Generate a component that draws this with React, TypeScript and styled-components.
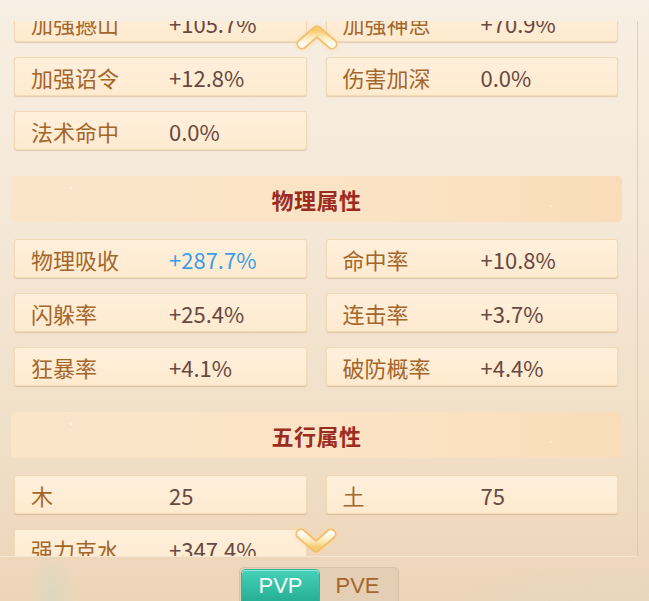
import React, { useLayoutEffect, useRef, useState } from "react";
import styled, { createGlobalStyle } from "styled-components";

interface IStat {
    label: string;
    value: string;
    highlight?: boolean;
}
interface ISection {
    title?: string;
    stats: IStat[];
}

const sections: ISection[] = [
    {
        stats: [
            { label: "加强撼山", value: "+105.7%" },
            { label: "加强神思", value: "+70.9%" },
            { label: "加强诏令", value: "+12.8%" },
            { label: "伤害加深", value: "0.0%" },
            { label: "法术命中", value: "0.0%" },
        ],
    },
    {
        title: "物理属性",
        stats: [
            { label: "物理吸收", value: "+287.7%", highlight: true },
            { label: "命中率", value: "+10.8%" },
            { label: "闪躲率", value: "+25.4%" },
            { label: "连击率", value: "+3.7%" },
            { label: "狂暴率", value: "+4.1%" },
            { label: "破防概率", value: "+4.4%" },
        ],
    },
    {
        title: "五行属性",
        stats: [
            { label: "木", value: "25" },
            { label: "土", value: "75" },
            { label: "强力克水", value: "+347.4%" },
        ],
    },
];

const Chevron: React.FC<{ down?: boolean }> = ({ down }) => {
    const id = down ? "chev-down" : "chev-up";
    const d = down ? "M7 7 L22 20 L37 7" : "M7 20 L22 7 L37 20";
    return (
        <svg width="44" height="27" viewBox="0 0 44 27">
            <defs>
                <linearGradient id={id} x1="0" y1={down ? "0" : "1"} x2="0" y2={down ? "1" : "0"}>
                    <stop offset="0" stopColor="#fffcf0" />
                    <stop offset="0.6" stopColor="#fbe7b0" />
                    <stop offset="1" stopColor="#f6cc6e" />
                </linearGradient>
            </defs>
            <path d={d} fill="none" stroke="#f0b665" strokeWidth="11" strokeLinecap="round" strokeLinejoin="round" opacity="0.8" />
            <path d={d} fill="none" stroke={`url(#${id})`} strokeWidth="7.5" strokeLinecap="round" strokeLinejoin="round" />
        </svg>
    );
};

const App: React.FC = () => {
    const scrollRef = useRef<HTMLDivElement>(null);
    const [mode, setMode] = useState<"PVP" | "PVE">("PVP");

    useLayoutEffect(() => {
        if (scrollRef.current) scrollRef.current.scrollTop = 18;
    }, []);

    return (
        <Page>
            <GlobalStyle />
            <PanelWrap>
                <ScrollArea ref={scrollRef}>
                    <List>
                        {sections.map((section, i) => (
                            <Section key={i}>
                                {section.title && (
                                    <SectionHeader>{section.title}</SectionHeader>
                                )}
                                <Grid>
                                    {section.stats.map((stat) => (
                                        <Card key={stat.label}>
                                            <Label>{stat.label}</Label>
                                            <Value $highlight={stat.highlight}>{stat.value}</Value>
                                        </Card>
                                    ))}
                                </Grid>
                            </Section>
                        ))}
                    </List>
                </ScrollArea>
                <ArrowUp><Chevron /></ArrowUp>
                <ArrowDown><Chevron down /></ArrowDown>
            </PanelWrap>
            <Footer>
                <Toggle>
                    {(["PVP", "PVE"] as const).map((m) => (
                        <ToggleButton key={m} $active={mode === m} onClick={() => setMode(m)}>
                            {m}
                        </ToggleButton>
                    ))}
                </Toggle>
            </Footer>
        </Page>
    );
};
export default App;


const GlobalStyle = createGlobalStyle`
  body {
    margin: 0;
    background: #f3e6d3;
  }
`;

const Page = styled.div`
  width: 649px;
  height: 601px;
  overflow: hidden;
  position: relative;
  font-family: "Noto Sans CJK SC", "Noto Sans", sans-serif;
  background:
    radial-gradient(ellipse 22px 40px at 52px 595px, rgba(196, 218, 200, 0.45), transparent),
    radial-gradient(ellipse 200px 50px at 620px 615px, rgba(222, 222, 196, 0.4), transparent),
    linear-gradient(180deg, #f7efe3 0%, #f5e8d7 35%, #f1e0c9 70%, #edd5b8 100%);
`;

const PanelWrap = styled.div`
  position: relative;
  margin-top: 21px;
  width: 638px;
`;

const ScrollArea = styled.div`
  height: 535px;
  overflow-y: auto;
  scrollbar-width: none;
  border-right: 1px solid rgba(221, 200, 172, 0.8);
  border-bottom: 1px solid rgba(245, 232, 214, 0.9);
  &::-webkit-scrollbar {
    display: none;
  }
`;

const List = styled.div`
  display: flex;
  flex-direction: column;
  gap: 26px;
  padding: 0 15px 40px 11px;
`;

const Section = styled.div`
  display: flex;
  flex-direction: column;
  gap: 17px;
`;

const SectionHeader = styled.div`
  height: 46px;
  display: flex;
  align-items: center;
  justify-content: center;
  border-radius: 4px;
  background:
    radial-gradient(circle 2px at 60px 12px, rgba(255, 255, 255, 0.7), transparent),
    radial-gradient(circle 2px at 540px 30px, rgba(255, 255, 255, 0.6), transparent),
    linear-gradient(90deg, #fae5c9 0%, #fbe4c5 50%, #f9ddba 100%);
  color: #9c2b22;
  font-size: 22px;
  font-weight: 700;
  letter-spacing: 0.5px;
`;

const Grid = styled.div`
  display: grid;
  grid-template-columns: 1fr 1fr;
  column-gap: 19px;
  row-gap: 15px;
  padding: 0 4px 0 3px;
`;

const Card = styled.div`
  height: 39px;
  box-sizing: border-box;
  display: flex;
  align-items: center;
  padding-left: 16px;
  border-radius: 3px;
  border: 1px solid rgba(236, 208, 170, 0.7);
  background: linear-gradient(180deg, #fff0dc 0%, #feeacf 100%);
  box-shadow: 0 1px 1px rgba(190, 140, 90, 0.35);
`;

const Label = styled.span`
  width: 138px;
  flex-shrink: 0;
  color: #a4662a;
  font-size: 22px;
  line-height: 1;
`;

const Value = styled.span<{ $highlight?: boolean }>`
  color: ${({ $highlight }) => ($highlight ? "#3c9de4" : "#684840")};
  font-size: 22px;
  line-height: 1;
`;

const ArrowUp = styled.div`
  position: absolute;
  top: 3px;
  left: 295px;
  filter: drop-shadow(0 0 2px rgba(255, 220, 150, 0.9));
`;

const ArrowDown = styled.div`
  position: absolute;
  top: 506px;
  left: 294px;
  filter: drop-shadow(0 0 2px rgba(255, 220, 150, 0.9));
`;

const Footer = styled.div`
  width: 638px;
  display: flex;
  justify-content: center;
  padding-top: 10px;
`;

const Toggle = styled.div`
  display: flex;
  padding: 2px;
  border-radius: 5px;
  border: 1px solid rgba(214, 190, 160, 0.8);
  background: rgba(224, 204, 180, 0.7);
`;

const ToggleButton = styled.button<{ $active: boolean }>`
  width: 77px;
  height: 36px;
  border: none;
  border-radius: 4px;
  padding: 0 0 4px;
  cursor: pointer;
  font-family: "Liberation Sans", Arial, sans-serif;
  font-size: 22px;
  color: ${({ $active }) => ($active ? "#f4fffb" : "#a7652a")};
  background: ${({ $active }) =>
    $active ? "linear-gradient(180deg, #45d2b8 0%, #22a98f 100%)" : "transparent"};
  box-shadow: ${({ $active }) =>
    $active ? "inset 0 1px 0 rgba(255,255,255,0.45), 0 0 0 1px #2cb79c" : "none"};
`;
